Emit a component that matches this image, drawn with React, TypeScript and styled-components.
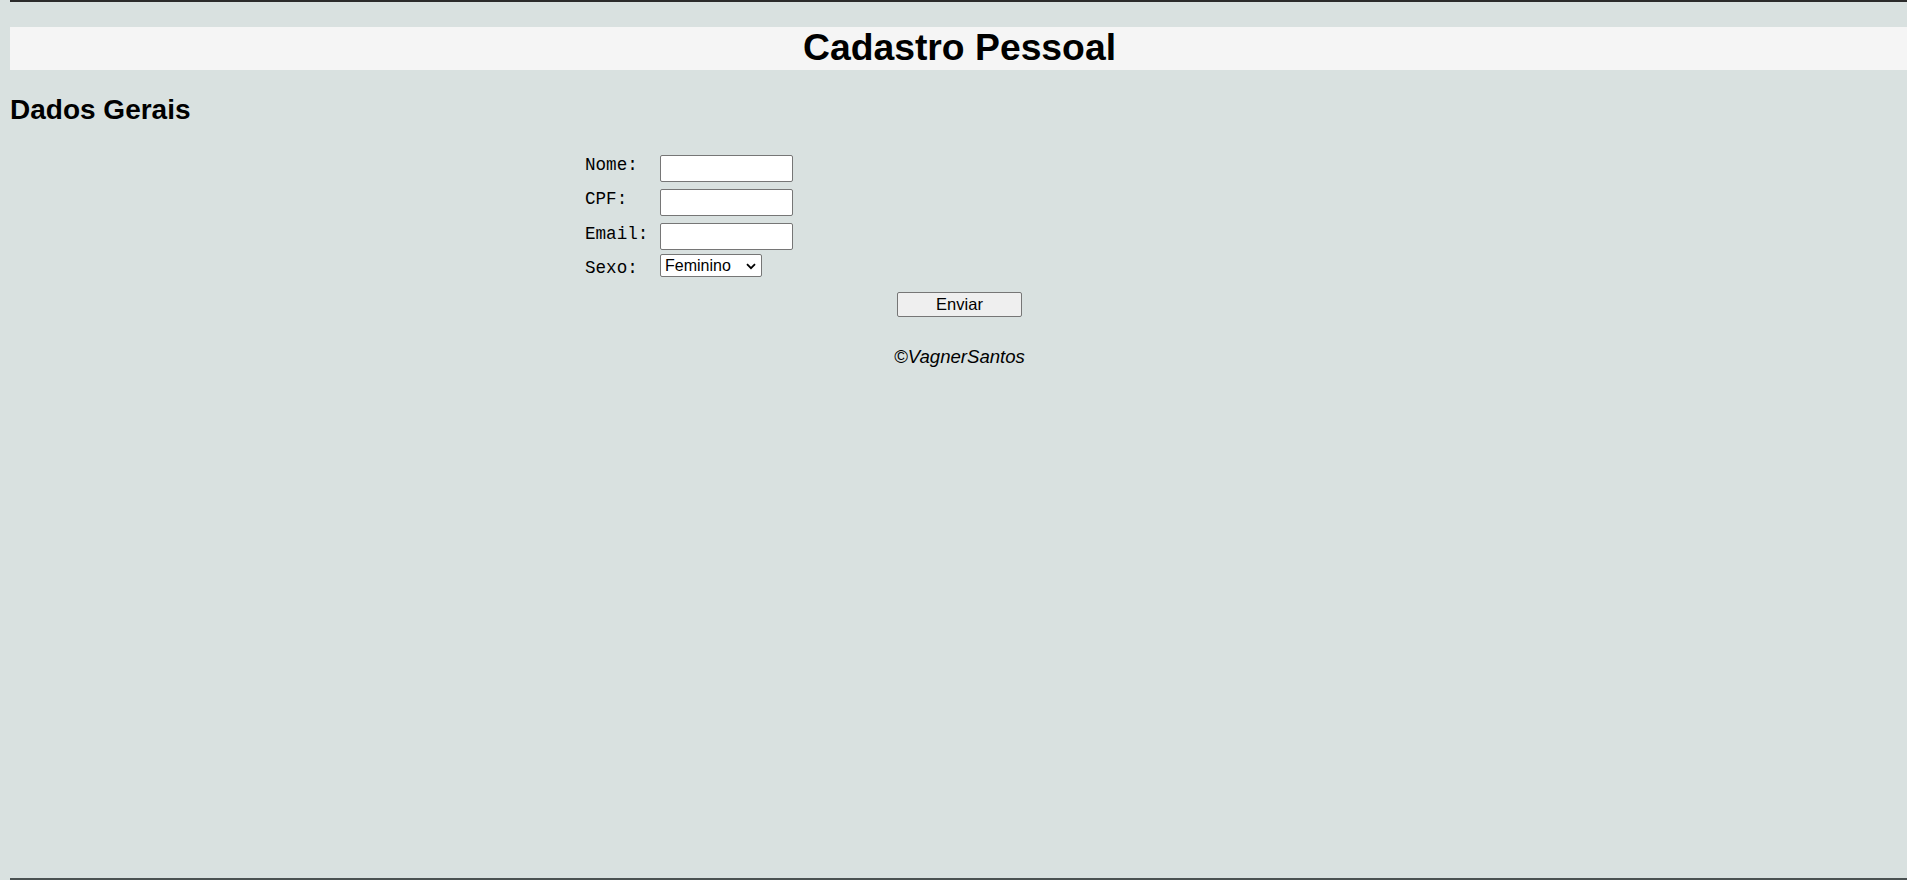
import styled, { createGlobalStyle } from "styled-components";

const GlobalStyle = createGlobalStyle`
  html, body {
    margin: 0;
    padding: 0;
    background: #d9e1e0;
    overflow: hidden;
  }
  body {
    font-family: "Liberation Sans", Arial, sans-serif;
    color: #000;
  }
`;

export default function App() {
  return (
    <>
      <GlobalStyle />
      <Page>
        <Header>
          <Title>Cadastro Pessoal</Title>
        </Header>
        <Section>Dados Gerais</Section>
        <Form onSubmit={(e) => e.preventDefault()}>
          <Fields>
            <Label htmlFor="nome">Nome:</Label>
            <Input id="nome" type="text" />
            <Label htmlFor="cpf">CPF:</Label>
            <Input id="cpf" type="text" />
            <Label htmlFor="email">Email:</Label>
            <Input id="email" type="text" />
            <Label htmlFor="sexo">Sexo:</Label>
            <SelectWrap>
              <Select id="sexo" defaultValue="f">
                <option value="f">Feminino</option>
                <option value="m">Masculino</option>
              </Select>
              <Chevron width="10" height="7" viewBox="0 0 10 7">
                <path d="M1 1.2 L5 5.2 L9 1.2" fill="none" stroke="#000" strokeWidth="1.8" />
              </Chevron>
            </SelectWrap>
          </Fields>
          <Button type="submit">Enviar</Button>
        </Form>
        <Footer>©VagnerSantos</Footer>
      </Page>
    </>
  );
}

const Page = styled.main`
  box-sizing: border-box;
  min-height: 100vh;
  border-top: 2px solid #2b2b2b;
  border-bottom: 2px solid #4a5152;
  padding-top: 25px;
  margin-left: 10px;
  margin-right: -2px;
`;

const Header = styled.header`
  height: 43px;
  background: #f5f5f5;
  display: flex;
  align-items: center;
  justify-content: center;
`;

const Title = styled.h1`
  margin: -3px 0 0;
  font-size: 37.3px;
  font-weight: bold;
  line-height: 43px;
`;

const Section = styled.h2`
  margin: 24px 0 0;
  font-size: 28px;
  font-weight: bold;
`;

const Form = styled.form`
  margin-top: 22px;
  display: flex;
  flex-direction: column;
`;

const Fields = styled.div`
  display: grid;
  grid-template-columns: 64px auto;
  grid-auto-rows: 34.3px;
  column-gap: 11px;
  align-items: center;
  justify-content: start;
  margin-left: 575px;
`;

const Label = styled.label`
  font-family: "Liberation Mono", "Courier New", monospace;
  font-size: 17.6px;
  line-height: 20px;
`;

const Input = styled.input`
  box-sizing: border-box;
  width: 133px;
  height: 27px;
  margin: 6px 0 0;
  padding: 2px 3px;
  border: 1px solid #767676;
  border-radius: 2px;
  background: #fff;
  font-family: "Liberation Sans", Arial, sans-serif;
  font-size: 16px;
`;

const SelectWrap = styled.span`
  position: relative;
  justify-self: start;
  display: inline-flex;
  margin: 0 0 6px;
`;

const Select = styled.select`
  box-sizing: border-box;
  width: 102px;
  height: 23px;
  margin: 0;
  padding: 0 2px 0 4px;
  border: 1px solid #767676;
  border-radius: 2px;
  background: #fff;
  color: #000;
  font-family: "Liberation Sans", Arial, sans-serif;
  font-size: 16px;
  appearance: none;
  -webkit-appearance: none;
`;

const Chevron = styled.svg`
  position: absolute;
  right: 6px;
  top: 9px;
  pointer-events: none;
`;

const Button = styled.button`
  align-self: center;
  box-sizing: border-box;
  width: 125px;
  height: 25px;
  margin-top: 7px;
  border: 1px solid #767676;
  border-radius: 2px;
  background: #efefef;
  color: #000;
  font-family: "Liberation Sans", Arial, sans-serif;
  font-size: 16.5px;
  padding: 0;
`;

const Footer = styled.p`
  margin: 29px 0 0;
  text-align: center;
  font-style: italic;
  font-size: 18.6px;
`;
